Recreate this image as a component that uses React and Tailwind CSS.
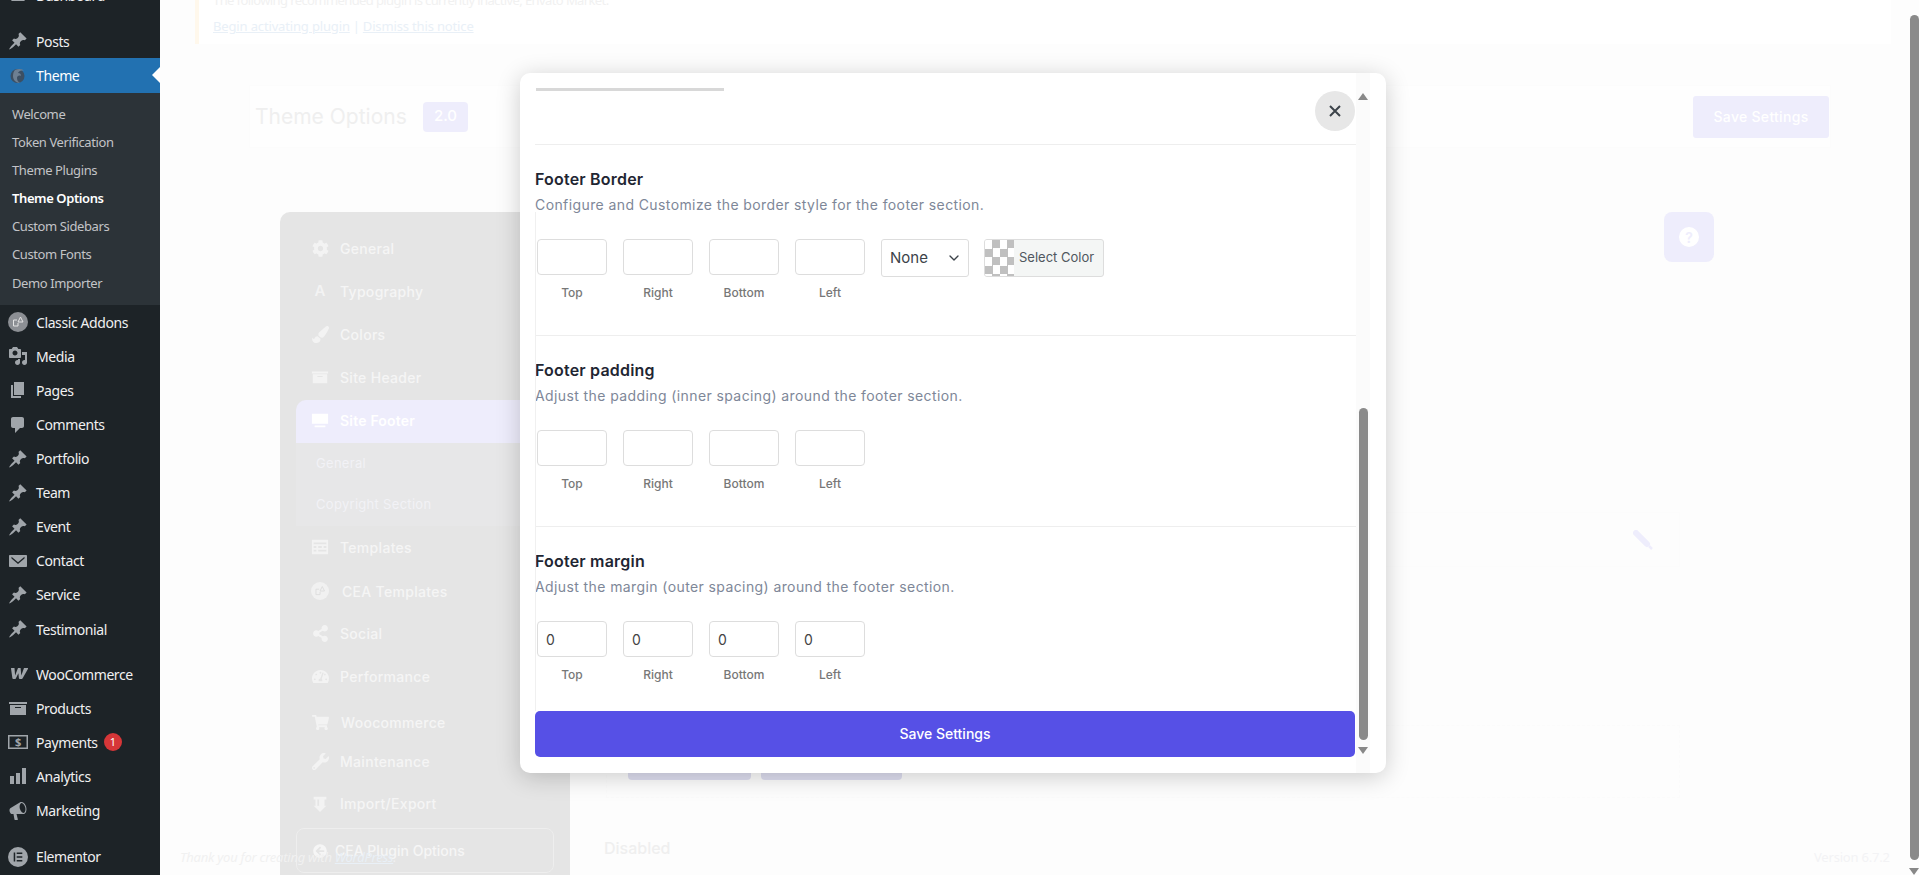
import { ChevronDown } from 'lucide-react';
import { FaCog, FaPaintBrush, FaShareAlt, FaTachometerAlt, FaShoppingCart, FaWrench, FaArrowCircleLeft } from 'react-icons/fa';

// dashicons style paths for the admin menu
const pin = 'M10.44 3.02l1.82-1.82 6.36 6.35-1.83 1.82c-1.05-.68-2.48-.57-3.41.36l-.75.75c-.92.93-1.04 2.35-.35 3.41l-1.83 1.82-2.41-2.41-2.8 2.79c-.42.42-3.38 2.71-3.8 2.29s1.86-3.39 2.28-3.81l2.79-2.79L4.1 9.36l1.83-1.82c1.05.69 2.48.57 3.4-.36l.75-.75c.93-.92 1.05-2.35.36-3.41z';
const gauge = 'M3.76 16h12.48c1.1-1.37 1.76-3.11 1.76-5 0-4.42-3.58-8-8-8s-8 3.58-8 8c0 1.89.66 3.63 1.76 5zM10 4c.55 0 1 .45 1 1s-.45 1-1 1-1-.45-1-1 .45-1 1-1zM6 6c.55 0 1 .45 1 1s-.45 1-1 1-1-.45-1-1 .45-1 1-1zm8 0c.55 0 1 .45 1 1s-.45 1-1 1-1-.45-1-1 .45-1 1-1z';
const media = 'M13 11V4c0-.55-.45-1-1-1h-1.67L9 1H5L3.67 3H2c-.55 0-1 .45-1 1v7c0 .55.45 1 1 1h10c.55 0 1-.45 1-1zM7 4.5c1.38 0 2.5 1.12 2.5 2.5S8.38 9.5 7 9.5 4.5 8.38 4.5 7 5.62 4.5 7 4.5zM14 6h5v10.5c0 1.38-1.12 2.5-2.5 2.5S14 17.88 14 16.5s1.12-2.5 2.5-2.5c.17 0 .34.02.5.05V9h-3V6zm-4 8.05V13h2v3.5c0 1.38-1.12 2.5-2.5 2.5S7 17.88 7 16.5 8.12 14 9.5 14c.17 0 .34.02.5.05z';
const pages = 'M6 15V2h10v13H6zm-1 1h8v2H3V5h2v11z';
const comments = 'M5 2h9c1.1 0 2 .9 2 2v7c0 1.1-.9 2-2 2h-2l-5 5v-5H5c-1.1 0-2-.9-2-2V4c0-1.1.9-2 2-2z';
const email = 'M2 4h16c.55 0 1 .45 1 1v10c0 .55-.45 1-1 1H2c-.55 0-1-.45-1-1V5c0-.55.45-1 1-1zm8 7.2L3.5 5.8v1.6L10 13l6.5-5.6V5.8z';
const archive = 'M19 4v2H1V4h18zM2 7h16v10H2V7zm11 3V9H7v1h6z';
const chart = 'M18 18V2h-4v16h4zm-6 0V7H8v11h4zm-6 0v-8H2v8h4z';
const megaphone = 'M18.15 5.94c.46 1.62.38 3.22-.02 4.48-.42 1.28-1.26 2.18-2.3 2.48-.16.06-.26.06-.4.06-.06.02-.12.02-.18.02-.06.02-.14.02-.22.02H8.5l1.4 5.5c.02.14-.06.26-.14.34-.08.1-.24.16-.34.16H6.95c-.1 0-.26-.06-.34-.16-.08-.08-.16-.2-.14-.34l-1-5.5H4.25c-.5.06-1.08-.18-1.54-.62s-.88-1.08-1.06-1.88c-.24-.8-.2-1.56-.02-2.2.18-.62.58-1.08 1.06-1.3l9.02-5.42c.1-.06.18-.1.24-.16.06-.04.14-.08.24-.12.16-.08.28-.12.5-.18 1.04-.3 2.24.1 3.22 1 .98.86 1.82 2.24 2.26 3.84zm-2.58 5.98c.4-.1.74-.34 1.04-.7.58-.7.86-1.76.86-3.04-.02-.64-.1-1.3-.28-1.98-.34-1.36-1.02-2.5-1.78-3.24-.38-.38-.8-.64-1.22-.78-.18-.06-.34-.1-.5-.1-.08 0-.14 0-.2.02-.4.12-.74.34-1.02.7-.6.7-.88 1.76-.88 3.04.02.64.1 1.3.28 1.98.34 1.34 1.02 2.5 1.78 3.24.4.38.8.66 1.22.78.16.06.34.08.5.08.06 0 .14 0 .2-.02z';
const elementor = 'M10 0a10 10 0 100 20A10 10 0 0010 0zM7.2 14.5H5.7v-9h1.5v9zm7.1 0H8.7V13h5.6v1.5zm0-3.7H8.7V9.2h5.6v1.6zm0-3.8H8.7V5.5h5.6V7z';
const woo = 'M3.2 4h3.3l.6 7.4L10 4h2.6l.7 7.4L16 4h3.6c.6 0 .6.4.3.9l-5.4 9.6c-.3.5-.8.5-1.3.5h-1.5c-.4 0-.7-.3-.8-.8l-.5-5-2.6 5.2c-.2.4-.6.6-1 .6H5.3c-.5 0-.8-.3-.9-.8L3 4.6c0-.4 0-.6.2-.6z';

function DashIcon({ d }) {
  return (
    <svg viewBox="0 0 20 20" className="w-5 h-5 fill-[#a0a5aa]">
      <path d={d} fillRule="evenodd" />
    </svg>
  );
}

function ThemeLogo() {
  return (
    <svg viewBox="0 0 20 20" className="w-5 h-5">
      <circle cx="9.5" cy="10" r="7" fill="#3c4f63" />
      <path d="M7 4c4-2 8-1 9 1-3-1-5 0-6 2 2 0 3 1 3 3-2-1-4 0-4 2 0 2 1 4 3 5-4 0-7-3-7-7 0-3 1-5 2-6z" fill="#6d7f92" />
    </svg>
  );
}

function CeaLogo({ fill = '#8c8f94', stroke = '#e4e4e4' }) {
  return (
    <svg viewBox="0 0 20 20" className="w-5 h-5">
      <circle cx="10" cy="10" r="10" fill={fill} />
      <path d="M9 8H5.5v6H10v-3M12.5 5L10 10h5z" fill="none" stroke={stroke} strokeWidth="1" />
    </svg>
  );
}

function PaymentsIcon() {
  return (
    <svg viewBox="0 0 20 20" className="w-5 h-5">
      <path d="M0 3h20v14H0zM1.5 4.5v11h17v-11z" fill="#a0a5aa" fillRule="evenodd" />
      <text x="10" y="14" textAnchor="middle" fontSize="11" fontWeight="700" fill="#a0a5aa">$</text>
    </svg>
  );
}

const menuTop = [
  { label: 'Posts', icon: <DashIcon d={pin} /> },
];

const themeSub = ['Welcome', 'Token Verification', 'Theme Plugins', 'Theme Options', 'Custom Sidebars', 'Custom Fonts', 'Demo Importer'];

const menuMain = [
  { label: 'Classic Addons', icon: <CeaLogo /> },
  { label: 'Media', icon: <DashIcon d={media} /> },
  { label: 'Pages', icon: <DashIcon d={pages} /> },
  { label: 'Comments', icon: <DashIcon d={comments} /> },
  { label: 'Portfolio', icon: <DashIcon d={pin} /> },
  { label: 'Team', icon: <DashIcon d={pin} /> },
  { label: 'Event', icon: <DashIcon d={pin} /> },
  { label: 'Contact', icon: <DashIcon d={email} /> },
  { label: 'Service', icon: <DashIcon d={pin} /> },
  { label: 'Testimonial', icon: <DashIcon d={pin} /> },
];

const menuShop = [
  { label: 'WooCommerce', icon: <DashIcon d={woo} /> },
  { label: 'Products', icon: <DashIcon d={archive} /> },
  { label: 'Payments', icon: <PaymentsIcon />, badge: '1' },
  { label: 'Analytics', icon: <DashIcon d={chart} /> },
  { label: 'Marketing', icon: <DashIcon d={megaphone} /> },
];

function MenuRow({ item }) {
  return (
    <div className="h-[34.1px] flex items-center pl-2 text-[14px] text-[#f0f0f1]">
      <span className="w-5 h-5 shrink-0">{item.icon}</span>
      <span className="ml-2">{item.label}</span>
      {item.badge && (
        <span className="ml-[6px] w-[18px] h-[18px] rounded-full bg-[#d63638] text-white text-[11px] flex items-center justify-center">{item.badge}</span>
      )}
    </div>
  );
}

function Sidebar() {
  return (
    <div className="w-40 shrink-0 bg-[#1d2327] [font-family:'Noto_Sans',sans-serif] tracking-[-0.4px]">
      <div className="-mt-[22px]">
        <MenuRow item={{ label: 'Dashboard', icon: <DashIcon d={gauge} /> }} />
        <div className="h-[12px]" />
        {menuTop.map((m) => <MenuRow key={m.label} item={m} />)}
        <div className="relative h-[35px] bg-[#2271b1] flex items-center pl-2 text-[14px] text-white">
          <span className="w-5 h-5 shrink-0"><ThemeLogo /></span>
          <span className="ml-2">Theme</span>
          <span className="absolute right-0 top-[9px] border-y-[8px] border-y-transparent border-r-[8px] border-r-white" />
        </div>
        <div className="bg-[#2c3338] h-[212px] pt-[7px]">
          {themeSub.map((s) => (
            <div key={s} className={`h-[28.2px] flex items-center pl-3 text-[13px] ${s === 'Theme Options' ? 'font-semibold text-white' : 'text-[#c3c4c7]'}`}>{s}</div>
          ))}
        </div>
        {menuMain.map((m) => <MenuRow key={m.label} item={m} />)}
        <div className="h-[11px]" />
        {menuShop.map((m) => <MenuRow key={m.label} item={m} />)}
        <div className="h-[12px]" />
        <MenuRow item={{ label: 'Elementor', icon: <DashIcon d={elementor} /> }} />
      </div>
    </div>
  );
}

const panelIcon = 'text-[17px] text-[#f3f3f3]';

const panelRows = [
  { label: 'General', icon: <FaCog className={panelIcon} />, h: 'h-[43px]' },
  { label: 'Typography', icon: <span className="text-[15px] font-semibold text-[#f3f3f3]">A</span>, h: 'h-[43px]' },
  { label: 'Colors', icon: <FaPaintBrush className={panelIcon} />, h: 'h-[43px]' },
  { label: 'Site Header', icon: <svg viewBox="0 0 20 20" className="w-[18px] h-[18px] fill-[#f3f3f3]"><path d={archive} fillRule="evenodd" /></svg>, h: 'h-[44px] pb-[2px]' },
];

const panelRowsAfter = [
  { label: 'Templates', icon: <svg viewBox="0 0 20 20" className="w-[18px] h-[18px] fill-[#f3f3f3]"><path d="M1 2h18v16H1zM3 5v2h14V5zm0 4v2h3V9zm5 0v2h4V9zm6 0v2h3V9zm-11 4v2h3v-2zm5 0v2h9v-2z" fillRule="evenodd" /></svg>, h: 'h-[44px] pb-[2px]' },
  { label: 'CEA Templates', icon: <CeaLogo fill="#f1f1f1" stroke="#dcdcdc" />, h: 'h-[42px]', gap: 'ml-[13px]' },
  { label: 'Social', icon: <FaShareAlt className={panelIcon} />, h: 'h-[43px]' },
  { label: 'Performance', icon: <FaTachometerAlt className={panelIcon} />, h: 'h-[43px]' },
  { label: 'Woocommerce', icon: <FaShoppingCart className={panelIcon} />, h: 'h-[48px]', gap: 'ml-[12px]' },
  { label: 'Maintenance', icon: <FaWrench className={panelIcon} />, h: 'h-[30px]' },
  { label: 'Import/Export', icon: <svg viewBox="0 0 20 20" className="w-[18px] h-[18px] fill-[#f3f3f3]"><path d="M3 2h14v3h-2v7h2l-7 7-7-7h2V5H3zm4 3v7h2V5z" fillRule="evenodd" /></svg>, h: 'h-[52px] pt-[3px]' },
];

function PanelRow({ row }) {
  return (
    <div className={`${row.h} flex items-center pl-[15px]`}>
      <span className="w-[18px] flex justify-center shrink-0">{row.icon}</span>
      <span className={`${row.gap || 'ml-[11px]'} text-[14px] font-medium tracking-[0.3px] text-[#f5f5f5] whitespace-nowrap`}>{row.label}</span>
    </div>
  );
}

function BackgroundPage() {
  return (
    <div className="flex-1 min-w-0 bg-[#fdfdfd] [font-family:Inter,sans-serif]">
      {/* notice */}
      <div className="-mt-[18px] ml-[35px] mr-[28px] h-[62px] bg-white border-l-4 border-[#fff8ec] pl-[14px] pt-[9px] [font-family:'Noto_Sans',sans-serif] text-[13px]">
        <p className="text-[#f1f1f1] leading-[18px] tracking-[-0.6px]">The following recommended plugin is currently inactive, Envato Market.</p>
        <p className="mt-[8px] leading-[18px] text-[#e9f0f7] tracking-[-0.15px]">
          <span className="underline">Begin activating plugin</span>
          <span className="mx-[3px]">|</span>
          <span className="underline">Dismiss this notice</span>
        </p>
      </div>

      {/* header card */}
      <div className="mt-[41px] ml-[89px] mr-[88px] h-[63px] border border-[#fcfcfc] bg-[#fefefe] flex items-center justify-between pl-[5px] pr-px">
        <div className="flex items-center">
          <span className="text-[21px] text-[#efefef] w-[168px] whitespace-nowrap">Theme Options</span>
          <span className="w-[45px] h-[30px] rounded-[4px] bg-[#eeedfc] text-white text-[15px] font-medium flex items-center justify-center">2.0</span>
        </div>
        <div className="w-[136px] h-[42px] rounded-[3px] bg-[#eeedfc] text-white text-[14px] font-medium tracking-[0.3px] flex items-center justify-center">Save Settings</div>
      </div>

      {/* settings body */}
      <div className="mt-[64px] ml-[120px] flex">
        <div className="w-[290px] h-[700px] bg-[#e5e5e5] rounded-tl-[10px] pt-[15px] px-4">
          {panelRows.map((r) => <PanelRow key={r.label} row={r} />)}
          <div className="h-[43px] bg-[#eeedfc] rounded-t-[10px] flex items-center pl-[15px] pb-[2px]">
            <svg viewBox="0 0 20 20" className="w-[18px] h-[18px] fill-white"><path d="M1 2h18v11H1zM4 15h12v2H4z" /></svg>
            <span className="ml-[11px] text-[14px] font-semibold tracking-[0.2px] text-white">Site Footer</span>
          </div>
          <div className="bg-[#e7e7e8]">
            <div className="h-[41px] flex items-center pl-5 text-[13px] tracking-[0.3px] text-[#f2f2f6]">General</div>
            <div className="h-[42px] flex items-center pl-5 text-[13px] tracking-[0.3px] text-[#f2f2f6]">Copyright Section</div>
          </div>
          {panelRowsAfter.map((r) => <PanelRow key={r.label} row={r} />)}
          <div className="h-[45px] border border-[#eeeeee] rounded-[8px] flex items-center pl-[16px]">
            <FaArrowCircleLeft className="text-[14px] text-[#f6f6f6]" />
            <span className="ml-[8px] text-[14px] font-medium text-[#f6f6f6]">CEA Plugin Options</span>
          </div>
        </div>

        <div className="ml-[36px] w-[1108px] flex flex-col">
          <div className="self-end w-[50px] h-[50px] rounded-[8px] bg-[#eeedfc] flex items-center justify-center">
            <span className="w-[20px] h-[20px] rounded-full bg-white text-[#eeedfc] text-[14px] font-semibold flex items-center justify-center">?</span>
          </div>
          <div className="mt-[250px] w-[1074px] h-[55px] border border-[#fcfcfc] flex items-center justify-end pr-[26px]">
            <svg viewBox="0 0 20 20" className="w-[20px] h-[20px]">
              <path d="M3 3l11 11" stroke="#eeedfc" strokeWidth="6" strokeLinecap="round" />
              <path d="M16 16l3 3" stroke="#eeedfc" strokeWidth="2.5" />
            </svg>
          </div>
          <div className="mt-[158px] w-[1074px] h-[73px] border border-dashed border-[#fbfbfb] flex items-end gap-[10px] pl-[21px] pb-[17px]">
            <div className="w-[123px] h-[40px] rounded-[4px] bg-[#dfdff1]" />
            <div className="w-[141px] h-[40px] rounded-[4px] bg-[#dfdff1]" />
          </div>
          <div className="mt-[38px] -ml-[2px] text-[16px] leading-[24px] font-medium text-[#efefef]">Disabled</div>
        </div>
      </div>
    </div>
  );
}

function SizeInputs({ values }) {
  const labels = ['Top', 'Right', 'Bottom', 'Left'];
  return (
    <>
      {labels.map((label, i) => (
        <div key={label} className="w-[70px]">
          <input
            readOnly
            defaultValue={values ? values[i] : ''}
            className="w-[70px] h-[36px] border border-[#dddddd] rounded-[4px] pl-[8px] text-[14px] text-[#444444] outline-none bg-white"
          />
          <div className="mt-[9px] text-center text-[12px] font-medium leading-[18px] text-[#777777]">{label}</div>
        </div>
      ))}
    </>
  );
}

function Section({ title, desc, height, children }) {
  return (
    <div className={`${height} border-t border-[#eeeeee] pt-[22px]`}>
      <h3 className="text-[16px] leading-[24px] font-semibold tracking-[0.2px] text-[#1f2633]">{title}</h3>
      <p className="mt-[2px] text-[14px] leading-[24px] tracking-[0.4px] text-[#7e8798]">{desc}</p>
      <div className="mt-[22px] ml-[2px] flex items-start gap-4">{children}</div>
    </div>
  );
}

function Modal() {
  return (
    <div className="absolute left-[520px] top-[73px] w-[866px] h-[700px] bg-white rounded-[10px] shadow-[0_4px_24px_rgba(0,0,0,0.2)] flex pl-[15px] overflow-hidden [font-family:Inter,sans-serif]">
      <div className="w-[821px] shrink-0 pt-[15px]">
        <div className="ml-px w-[188px] h-[3px] bg-[#d8d8d8]" />
        <div className="h-[53px]" />
        <Section title="Footer Border" desc="Configure and Customize the border style for the footer section." height="h-[191px]">
          <SizeInputs />
          <div className="w-[88px] h-[38px] border border-[#dddddd] rounded-[3px] flex items-center justify-between pl-2 pr-[6px] text-[15px] text-[#3c434a]">
            None
            <ChevronDown className="w-[16px] h-[16px]" strokeWidth={2} />
          </div>
          <div className="-ml-px w-[120px] h-[38px] border border-[#dddddd] rounded-[3px] bg-[#f4f6f5] flex items-center overflow-hidden">
            <span className="w-[29px] h-full shrink-0 bg-[conic-gradient(#c0c0c0_25%,#ffffff_0_50%,#c0c0c0_0_75%,#ffffff_0)] bg-[length:15px_17px]" />
            <span className="ml-[5px] text-[13px] text-[#50575e] whitespace-nowrap">Select Color</span>
          </div>
        </Section>
        <Section title="Footer padding" desc="Adjust the padding (inner spacing) around the footer section." height="h-[191px]">
          <SizeInputs />
        </Section>
        <Section title="Footer margin" desc="Adjust the margin (outer spacing) around the footer section." height="h-[185px]">
          <SizeInputs values={['0', '0', '0', '0']} />
        </Section>
        <button className="w-[820px] h-[46px] pb-[2px] rounded-[5px] bg-[#5650e6] text-white text-[14px] font-medium">Save Settings</button>
      </div>

      {/* scrollbar */}
      <div className="w-[14px] shrink-0 bg-[#fbfbfb] flex flex-col items-center pt-[20px] pb-[19px]">
        <span className="border-x-[5px] border-x-transparent border-b-[7px] border-b-[#888888]" />
        <div className="mt-[308px] w-[9px] h-[332px] rounded-full bg-[#8a8a8a]" />
        <span className="mt-[7px] border-x-[5px] border-x-transparent border-t-[7px] border-t-[#888888]" />
      </div>

      {/* faint guide down the left of the form */}
      <span className="absolute left-[15px] top-[139px] h-[499px] w-px bg-[#f0f0f0]" />

      <button className="absolute left-[795px] top-[18px] w-10 h-10 rounded-full bg-[#e7e7e7] flex items-center justify-center">
        <svg viewBox="0 0 12 12" className="w-3 h-3 stroke-[#3c434a] stroke-2 fill-none"><path d="M1 1l10 10M11 1L1 11" /></svg>
      </button>
    </div>
  );
}

export default function App() {
  return (
    <div className="relative w-[1919px] h-[875px] overflow-hidden flex bg-white">
      <Sidebar />
      <BackgroundPage />
      <Modal />

      <div className="absolute left-[180px] top-[848px] text-[13px] italic tracking-[-0.25px] text-[#f1f1f1] [font-family:'Noto_Sans',sans-serif]">
        Thank you for creating with <span className="underline text-[#e9f0f7]">WordPress</span>.
      </div>
      <div className="absolute left-[1814px] top-[848px] text-[13px] tracking-[-0.2px] text-[#f3f3f5] [font-family:'Noto_Sans',sans-serif]">Version 6.7.2</div>

      {/* page scrollbar */}
      <div className="absolute right-0 top-[15px] w-[9px] h-[845px] rounded-full bg-[#8a8a8a]" />
      <span className="absolute right-0 bottom-0 border-x-[5px] border-x-transparent border-t-[7px] border-t-[#888888]" />
    </div>
  );
}
